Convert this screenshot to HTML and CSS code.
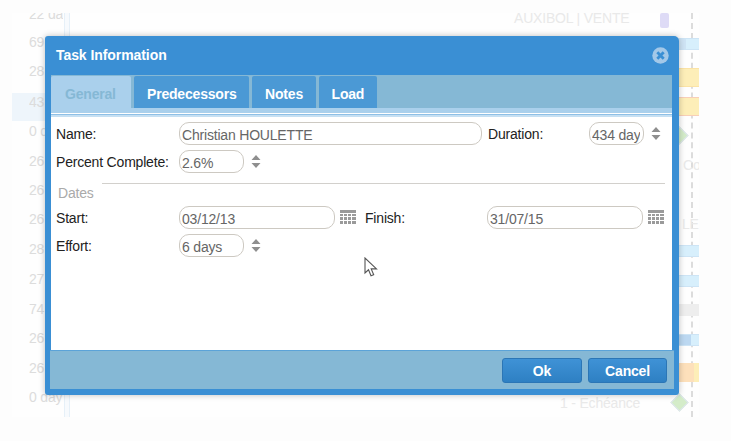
FILE: index.html
```html
<!DOCTYPE html>
<html lang="en">
<head>
<meta charset="utf-8">
<title>Task Information</title>
<link rel="stylesheet" href="styles.css">
</head>
<body>
<div class="canvas">
  <div class="row-hl"></div>
  <div class="vline"></div>
  <div class="dash"></div>
  <span class="num n1">22 days</span>
  <span class="num n2">69</span>
  <span class="num n3">28</span>
  <span class="num n4">43</span>
  <span class="num n5">0 d</span>
  <span class="num n6">26</span>
  <span class="num n7">26</span>
  <span class="num n8">26</span>
  <span class="num n9">28</span>
  <span class="num n10">27</span>
  <span class="num n11">74</span>
  <span class="num n12">26</span>
  <span class="num n13">26</span>
  <span class="num n14">0 day</span>
  <span class="ghost g1">AUXIBOL | VENTE</span>
  <span class="ghost g2">Co</span>
  <span class="ghost g3">LE</span>
  <span class="ghost g4">1 - Echéance</span>
  <div class="bar purple"></div>
  <div class="bar blue b1"></div>
  <div class="bar yellow b2"></div>
  <div class="bar yellow red b3"></div>
  <div class="bar blue b4"></div>
  <div class="bar blue b5"></div>
  <div class="bar grey b6"></div>
  <div class="bar blue b7"></div>
  <div class="bar orange b8"></div>
  <div class="diamond d1"></div>
  <div class="diamond d2"></div>
</div>

<section class="dialog">
  <header class="title">
    <h1 class="title-text">Task Information</h1>
    <svg class="close" width="17" height="17" viewBox="0 0 17 17"><circle cx="8.500" cy="8.500" r="8.200" fill="#a3c8e8"/><path d="M5.300 5.300l6.400 6.400M11.700 5.300l-6.400 6.400" stroke="#3a8fd4" stroke-width="2.800"/></svg>
  </header>
  <div class="inner">
    <nav class="tabs">
      <span class="tab active">General</span>
      <span class="tab">Predecessors</span>
      <span class="tab">Notes</span>
      <span class="tab">Load</span>
    </nav>
    <div class="strip"></div>
    <div class="body">
      <div class="form-row">
        <label class="lbl">Name:</label>
        <input class="field f-name" value="Christian HOULETTE">
        <label class="lbl lbl-dur">Duration:</label>
        <input class="field f-dur" value="434 days">
        <svg class="spin" width="10" height="15" viewBox="0 0 10 15"><path d="M5 1l4.500 5h-9zM5 14l4.500-5h-9z" fill="#8f8f8f"/></svg>
      </div>
      <div class="form-row">
        <label class="lbl">Percent Complete:</label>
        <input class="field f-short" value="2.6%">
        <svg class="spin" width="10" height="15" viewBox="0 0 10 15"><path d="M5 1l4.500 5h-9zM5 14l4.500-5h-9z" fill="#8f8f8f"/></svg>
      </div>
      <div class="group">
        <span class="legend">Dates</span>
      </div>
      <div class="form-row">
        <label class="lbl">Start:</label>
        <input class="field f-date" value="03/12/13">
        <svg class="cal" width="16" height="15" viewBox="0 0 16 15"><path d="M0 0h16v3H0z" fill="#9a9a9a"/><path d="M0 4h3v2H0zM4 4h3v2H4zM8 4h3v2H8zM12 4h4v2h-4zM0 7h3v3H0zM4 7h3v3H4zM8 7h3v3H8zM12 7h4v3h-4zM0 11h3v3H0zM4 11h3v3H4zM8 11h3v3H8zM12 11h4v3h-4z" fill="#9a9a9a"/></svg>
        <label class="lbl lbl-fin">Finish:</label>
        <input class="field f-date" value="31/07/15">
        <svg class="cal" width="16" height="15" viewBox="0 0 16 15"><path d="M0 0h16v3H0z" fill="#9a9a9a"/><path d="M0 4h3v2H0zM4 4h3v2H4zM8 4h3v2H8zM12 4h4v2h-4zM0 7h3v3H0zM4 7h3v3H4zM8 7h3v3H8zM12 7h4v3h-4zM0 11h3v3H0zM4 11h3v3H4zM8 11h3v3H8zM12 11h4v3h-4z" fill="#9a9a9a"/></svg>
      </div>
      <div class="form-row">
        <label class="lbl">Effort:</label>
        <input class="field f-short" value="6 days">
        <svg class="spin" width="10" height="15" viewBox="0 0 10 15"><path d="M5 1l4.500 5h-9zM5 14l4.500-5h-9z" fill="#8f8f8f"/></svg>
      </div>
    </div>
    <footer class="foot">
      <button class="btn">Ok</button>
      <button class="btn btn-cancel">Cancel</button>
    </footer>
  </div>
  <svg class="cursor" width="14" height="21" viewBox="0 0 14 21"><path d="M1 1v15l3.500-3.200 2.500 6 2.700-1.100-2.500-5.800H12.500z" fill="#fff" stroke="#555" stroke-width="1.100"/></svg>
</section>
</body>
</html>
```
FILE: styles.css
```css
* { box-sizing: border-box; }
html, body { margin: 0; height: 100%; }
body {
  width: 731px;
  height: 441px;
  overflow: hidden;
  position: relative;
  background: #fdfdfd;
  font-family: "Liberation Sans", Arial, sans-serif;
  font-size: 14px;
  letter-spacing: -0.19px;
}
.canvas {
  position: absolute;
  left: 12px;
  top: 13px;
  width: 687px;
  height: 404px;
  background: #fefefe;
  overflow: hidden;
}
.row-hl { position: absolute; left: 0; top: 80px; width: 40px; height: 28px; background: #eef5fb; }
.vline { position: absolute; left: 52px; top: 0; width: 6px; height: 404px; background: #f7fafd; border-left: 1px solid #e6f0f8; border-right: 1px solid #e6f0f8; }
.dash { position: absolute; left: 679px; top: 0; height: 404px; width: 0; border-left: 2px dashed #dcdcdc; }
.num { position: absolute; left: 17px; width: 34px; overflow: hidden; color: #dcdcdc; line-height: 16px; white-space: nowrap; }
.n1 { top: -7px; } .n2 { top: 21px; } .n3 { top: 50px; } .n4 { top: 81px; } .n5 { top: 110px; }
.n6 { top: 140px; } .n7 { top: 169px; } .n8 { top: 198px; } .n9 { top: 228px; } .n10 { top: 258px; }
.n11 { top: 288px; } .n12 { top: 317px; } .n13 { top: 347px; } .n14 { top: 376px; }
.ghost { position: absolute; color: #e9e9e9; line-height: 16px; white-space: nowrap; }
.g1 { left: 502px; top: -3px; }
.g2 { left: 671px; top: 144px; }
.g3 { left: 670px; top: 203px; }
.g4 { left: 548px; top: 382px; }
.bar { position: absolute; left: 660px; width: 28px; }
.purple { left: 648px; top: 0; width: 9px; height: 15px; background: #dedbf6; border-radius: 2px; }
.blue { height: 12px; background: #d7effc; border-top: 1px solid #cde4f5; border-bottom: 1px solid #cde4f5; }
.yellow { height: 19px; background: #fdeeb8; border-top: 1px solid #fbe3a6; border-bottom: 1px solid #fbe3a6; }
.red { border-top-color: #f8cfb8; border-bottom-color: #f8cfb8; }
.grey { height: 12px; background: #eeeeee; }
.orange { height: 19px; background: linear-gradient(90deg, #fde0bb 80%, #fdeeb8 80%); }
.b1 { top: 25px; background: linear-gradient(90deg, #cfe4f5 50%, #d7effc 50%); }
.b2 { top: 55px; } .b3 { top: 84px; } .b4 { top: 232px; } .b5 { top: 262px; }
.b6 { top: 291px; }
.b7 { top: 321px; background: linear-gradient(90deg, #bcd8f1 68%, #d7effc 68%); }
.b8 { top: 350px; }
.diamond { position: absolute; width: 13px; height: 13px; background: #d4ecc9; border: 1px solid #dfe6ef; transform: rotate(45deg); }
.d1 { left: 661px; top: 116px; }
.d2 { left: 661px; top: 383px; }

.dialog {
  position: absolute;
  left: 45px;
  top: 36px;
  width: 634px;
  height: 359px;
  display: flex;
  flex-direction: column;
  background: #3a8fd4;
  border-radius: 3px 5px 3px 3px;
  box-shadow: 0 0 6px rgba(0, 0, 0, .25);
}
.title {
  height: 39px;
  flex: none;
  display: flex;
  align-items: center;
  justify-content: space-between;
  padding: 0 10px 1px 11px;
}
.title-text { margin: 0; color: #fff; font-size: 14px; letter-spacing: -0.07px; font-weight: bold; }
.inner {
  flex: 1;
  margin: 0 5px 6px 5px;
  display: flex;
  flex-direction: column;
  min-height: 0;
}
.tabs {
  height: 33px;
  flex: none;
  display: flex;
  gap: 3px;
  margin: 0 2px 0 1px;
  padding-top: 1px;
  background: #85b8d5;
}
.tab {
  height: 33px;
  padding: 0 12.5px 0 13px;
  line-height: 37px;
  color: #fff;
  font-weight: bold;
  background: #4b99d5;
  border-radius: 2px 2px 0 0;
}
.tab.active { background: #aad0ec; color: #85b8d5; width: 80px; padding-left: 14px; }
.strip {
  height: 9px;
  flex: none;
  margin: 0 2px 0 1px;
  background: linear-gradient(#aad0ec 0 5px, #fff 5px 6px, #8fc0e6 6px 7px, #c6e0f3 7px);
}
.body {
  flex: 1;
  margin: 0 2px 0 1px;
  padding-top: 5px;
  background: #fff;
  display: flex;
  flex-direction: column;
  gap: 5px;
  min-height: 0;
}
.form-row { display: flex; align-items: center; height: 23px; padding-left: 5px; }
.lbl { color: #222; width: 123px; flex: none; padding-top: 1px; line-height: 23px; }
.lbl-dur { width: 101px; margin-left: 6px; }
.lbl-fin { width: 122px; margin-left: 9px; }
.field {
  height: 23px;
  padding: 2px 3px 0 2px;
  border: 1px solid #cdc9c2;
  border-radius: 10px;
  color: #666;
  background: #fff;
  font: 14px "Liberation Sans", Arial, sans-serif;
  letter-spacing: -0.19px;
  outline: none;
  flex: none;
}
.f-name { width: 303px; }
.f-dur { width: 55px; }
.f-short { width: 65px; }
.f-date { width: 156px; }
.spin { margin-left: 7px; flex: none; }
.cal { margin-left: 5px; flex: none; }
.group {
  height: 23px;
  margin: 0 7px;
  position: relative;
  background: linear-gradient(#d2d0cc, #d2d0cc) 44px 5px / 563px 1px no-repeat;
}
.legend { position: absolute; left: 0; top: 7px; color: #aaa; line-height: 16px; }
.foot {
  height: 39px;
  flex: none;
  padding: 7px 7px 0 0;
  display: flex;
  justify-content: flex-end;
  gap: 6px;
  background: #85b8d5;
  border-top: 1px solid #5ba3d8;
}
.btn {
  width: 80px;
  height: 25px;
  color: #fff;
  font: bold 14px "Liberation Sans", Arial, sans-serif;
  letter-spacing: -0.19px;
  background: linear-gradient(#3f92d6, #2e80c3);
  border: 1px solid #2b76b6;
  border-radius: 3px;
  padding: 0;
}
.btn-cancel { width: 79px; }
.close { display: block; }
.cursor { position: absolute; left: 319px; top: 221px; }
```
